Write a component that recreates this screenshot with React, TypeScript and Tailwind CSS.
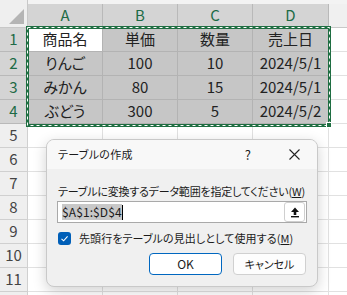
import React from "react";

const font = "font-['Noto_Sans_CJK_JP','Noto_Sans',sans-serif] [font-feature-settings:'palt']";

const colDefs = [
  { key: "A", w: "w-[75px]" },
  { key: "B", w: "w-[75px]" },
  { key: "C", w: "w-[75px]" },
  { key: "D", w: "w-[76px]" },
];

const data = [
  ["商品名", "単価", "数量", "売上日"],
  ["りんご", "100", "10", "2024/5/1"],
  ["みかん", "80", "15", "2024/5/1"],
  ["ぶどう", "300", "5", "2024/5/2"],
];

function ColumnHeader() {
  return (
    <div className="flex h-[28px]">
      {/* select-all corner */}
      <div className="relative w-[28px] h-full bg-[#efefef] border-r border-b border-[#c8c8c8]">
        <div className="absolute right-[3px] bottom-[3px] w-0 h-0 border-l-[15px] border-l-transparent border-b-[15px] border-b-[#b5b5b5]" />
      </div>
      {colDefs.map((c) => (
        <div key={c.key} className={`${c.w} h-full flex flex-col`}>
          <div className="h-[4px] bg-[#f3f3f3]" />
          <div className="flex-1 flex items-center justify-center bg-[#d4d4d4] border-r border-b border-[#b9b9b9] text-[15px] text-[#1d6b46]">
            {c.key}
          </div>
        </div>
      ))}
      <div className="flex-1 h-full flex flex-col">
        <div className="h-[4px] bg-[#f3f3f3]" />
        <div className="flex-1 bg-[#f0f0f0] border-b border-[#c8c8c8]" />
      </div>
    </div>
  );
}

function Row({ n }: { n: number }) {
  const inRange = n <= 4;
  const values = inRange ? data[n - 1] : null;
  return (
    <div className="flex h-[24px]">
      <div
        className={`w-[28px] h-full flex items-center justify-center border-r border-b text-[15px] ${
          inRange
            ? "bg-[#d4d4d4] border-[#b9b9b9] text-[#1d6b46]"
            : "bg-[#efefef] border-[#d0d0d0] text-[#444444]"
        }`}
      >
        {n <= 11 ? n : ""}
      </div>
      {colDefs.map((c, i) => {
        const active = n === 1 && i === 0;
        return (
          <div
            key={c.key}
            className={`${c.w} h-full flex items-center justify-center border-r border-b text-[15px] text-[#222222] ${
              active
                ? "bg-white border-[#b3b3b3]"
                : inRange
                ? "bg-[#c6c6c6] border-[#b3b3b3]"
                : "bg-white border-[#e1e1e1]"
            }`}
          >
            {values ? values[i] : ""}
          </div>
        );
      })}
      <div className="flex-1 h-full bg-white border-b border-[#e1e1e1]" />
    </div>
  );
}

function UploadIcon() {
  return (
    <svg width="12" height="12" viewBox="0 0 12 12">
      <path d="M6 1.5 L10 6 H7.3 V9 H4.7 V6 H2 Z" fill="#111" />
      <rect x="2" y="10" width="8" height="1.4" fill="#111" />
    </svg>
  );
}

function CreateTableDialog() {
  return (
    <div className="absolute left-[46px] top-[139px] w-[272px] h-[148px] rounded-[8px] border border-[#c9c9c9] bg-[#f0f0f0] shadow-[0_4px_14px_rgba(0,0,0,0.18)] overflow-hidden text-[#1b1b1b] whitespace-nowrap">
      <div className="h-[29px] bg-[#f8f8f8] flex items-center pl-[11px] pr-[17px] text-[11px]">
        <span className="flex-1 tracking-[0.3px]">テーブルの作成</span>
        <span className="text-[13px] mr-[38px]">?</span>
        <svg width="11" height="11" viewBox="0 0 11 11">
          <path d="M0.5 0.5 L10.5 10.5 M10.5 0.5 L0.5 10.5" stroke="#222" strokeWidth="1.1" />
        </svg>
      </div>
      <div className="px-[10px] pt-[14px] text-[11px]">
        <div className="h-[16px] leading-[16px] pl-[1px] tracking-[-0.2px]">
          テーブルに変換するデータ範囲を指定してください(<span className="underline">W</span>)
        </div>
        <div className="mt-[2px] h-[22px] bg-white border border-[#a9a9a9] flex items-center pl-[4px] pr-[1px]">
          <span className="flex-1 flex items-center">
            <span className="bg-[#c8c8c8] text-[12px] leading-[16px] tracking-[0.1px]">$A$1:$D$4</span>
            <span className="w-px h-[15px] bg-black" />
          </span>
          <div className="w-[21px] h-[20px] bg-white border border-[#cfcfcf] rounded-[3px] flex items-center justify-center">
            <UploadIcon />
          </div>
        </div>
        <div className="mt-[6px] h-[18px] flex items-center gap-[8px] pl-[1px]">
          <div className="w-[13px] h-[13px] rounded-[3px] bg-[#005fb8] flex items-center justify-center">
            <svg width="9" height="9" viewBox="0 0 9 9">
              <path d="M1.5 4.8 L3.6 6.8 L7.6 2.3" stroke="white" strokeWidth="1.1" fill="none" />
            </svg>
          </div>
          <span className="tracking-[0.1px]">
            先頭行をテーブルの見出しとして使用する(<span className="underline">M</span>)
          </span>
        </div>
        <div className="mt-[6px] flex justify-end gap-[11px] pr-[1px]">
          <button className="w-[73px] h-[22px] rounded-[4px] bg-white border border-[#0067c0] text-[12px]">
            OK
          </button>
          <button className="w-[73px] h-[22px] rounded-[4px] bg-[#fdfdfd] border border-[#d0d0d0] text-[11px]">
            キャンセル
          </button>
        </div>
      </div>
    </div>
  );
}

export default function App() {
  return (
    <div className={`relative w-[347px] h-[295px] overflow-hidden bg-white ${font}`}>
      <ColumnHeader />
      {[1, 2, 3, 4, 5, 6, 7, 8, 9, 10, 11, 12].map((n) => (
        <Row key={n} n={n} />
      ))}

      {/* copy range marching ants */}
      <svg className="absolute left-[26px] top-[26px]" width="306" height="102">
        <rect x="1.5" y="1.5" width="302" height="98" fill="none" stroke="#1f6e42" strokeWidth="3" />
        <rect x="1.5" y="1.5" width="302" height="98" fill="none" stroke="white" strokeWidth="1" strokeDasharray="3 3" />
      </svg>
      <div className="absolute left-[326px] top-[122px] w-[6px] h-[6px] bg-[#1f6e42] border border-white" />

      <CreateTableDialog />
    </div>
  );
}
